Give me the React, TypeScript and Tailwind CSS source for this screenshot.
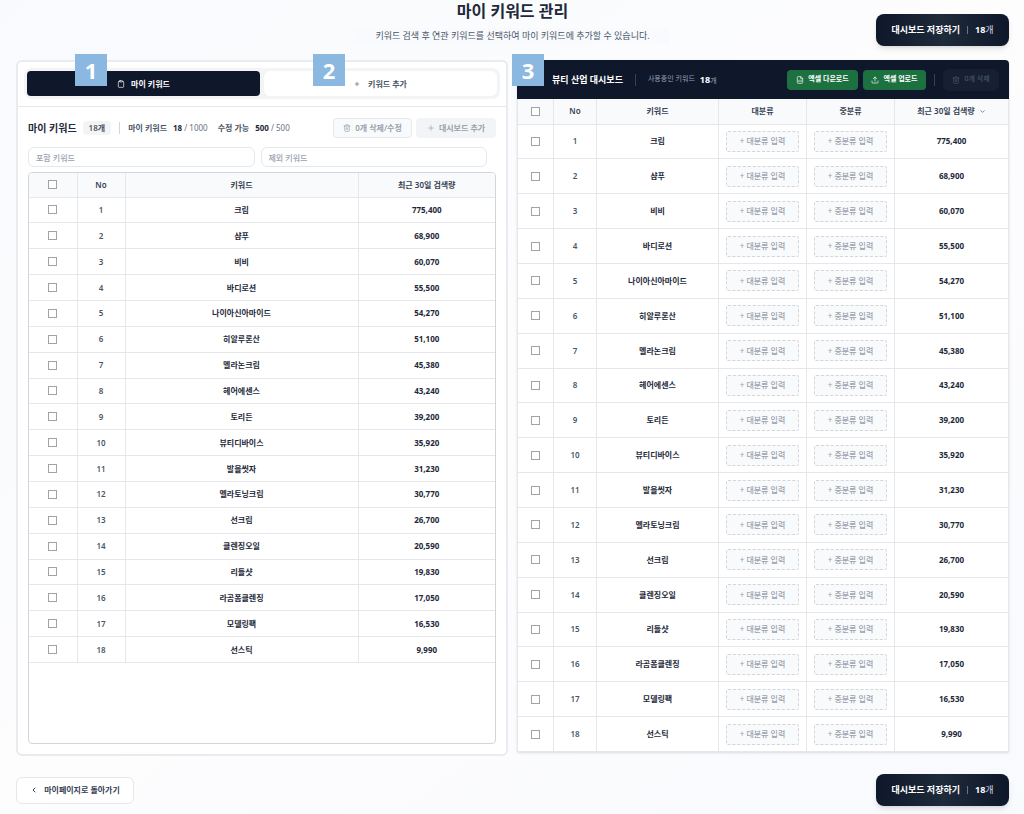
import { ChevronDown, ChevronLeft, Clipboard, FileSpreadsheet, Plus, Trash2, Upload } from "lucide-react";

const keywords: [string, string][] = [
  ["크림", "775,400"],
  ["샴푸", "68,900"],
  ["비비", "60,070"],
  ["바디로션", "55,500"],
  ["나이아신아마이드", "54,270"],
  ["히알루론산", "51,100"],
  ["멜라논크림", "45,380"],
  ["헤어에센스", "43,240"],
  ["토리든", "39,200"],
  ["뷰티디바이스", "35,920"],
  ["발을씻자", "31,230"],
  ["멜라토닝크림", "30,770"],
  ["선크림", "26,700"],
  ["클렌징오일", "20,590"],
  ["리들샷", "19,830"],
  ["라곰폼클렌징", "17,050"],
  ["모델링팩", "16,530"],
  ["선스틱", "9,990"],
];

function Check({ label }: { label: string }) {
  return (
    <input
      type="checkbox"
      aria-label={label}
      className="mx-auto block size-[9px] appearance-none border border-[#a3a3a3] bg-white checked:bg-slate-700"
    />
  );
}

function Marker({ n, place }: { n: number; place: string }) {
  return (
    <span
      className={`absolute z-10 flex size-8 items-center justify-center bg-[#8bb8e1] text-[22px] font-bold text-white ${place}`}
    >
      {n}
    </span>
  );
}

function SaveButton() {
  return (
    <button className="flex h-8 w-[133px] items-center justify-center gap-[7px] rounded-lg bg-linear-to-r from-[#0f172a] via-[#1e2b3a] to-[#0f172a] text-[9px] font-bold text-white shadow-md">
      <span>대시보드 저장하기</span>
      <span className="h-2 w-px bg-slate-500" />
      <span>
        18<span className="font-normal text-slate-300">개</span>
      </span>
    </button>
  );
}

function MyKeywords() {
  return (
    <section className="relative flex flex-col rounded-md border-2 border-[#e9ebef] bg-white">
      <Marker n={1} place="left-[57px] -top-2" />
      <Marker n={2} place="left-[295px] -top-2" />
      <div className="border-b border-gray-200 px-1.5 pt-1.5 pb-[7px]">
        <div className="grid grid-cols-2 gap-1 rounded-lg bg-gray-100 p-[3px]">
          <button className="flex h-[25px] items-center justify-center gap-1.5 rounded bg-[#0f172a] text-[8px] font-bold text-white">
            <Clipboard className="size-2" />
            마이 키워드
          </button>
          <button className="flex h-[25px] items-center justify-center gap-2 rounded-md bg-white text-[8px] font-semibold text-gray-600">
            <Plus className="size-1.5 text-gray-500" strokeWidth={3} />
            키워드 추가
          </button>
        </div>
      </div>
      <div className="flex grow flex-col px-2.5 pt-[11px] pb-2.5">
        <div className="flex h-5 items-center text-[8px] text-gray-500">
          <h2 className="text-[10px] font-bold text-gray-800">마이 키워드</h2>
          <span className="ml-1.5 flex h-3.5 items-center rounded bg-gray-100 px-1.5 font-semibold text-gray-600">18개</span>
          <span className="mx-2 h-3 w-px bg-gray-300" />
          <span className="font-semibold text-gray-600">마이 키워드</span>
          <span className="ml-1.5"><b className="text-gray-800">18</b> / 1000</span>
          <span className="ml-2.5 font-semibold text-gray-600">수정 가능</span>
          <span className="ml-1.5"><b className="text-gray-800">500</b> / 500</span>
          <button className="ml-auto flex h-5 w-[79px] items-center justify-center gap-1 rounded border border-gray-200 bg-gray-50 font-semibold text-gray-400">
            <Trash2 className="size-2" />
            0개 삭제/수정
          </button>
          <button className="ml-1 flex h-5 w-20 items-center justify-center gap-1 rounded bg-gray-100 font-semibold text-gray-400">
            <Plus className="size-2" />
            대시보드 추가
          </button>
        </div>
        <div className="mt-[9px] grid grid-cols-2 gap-1.5 pr-[9px]">
          <input
            aria-label="포함 키워드"
            placeholder="포함 키워드"
            className="h-5 min-w-0 rounded-md border border-gray-200 px-[7px] text-[8px] font-medium placeholder:text-gray-400"
          />
          <input
            aria-label="제외 키워드"
            placeholder="제외 키워드"
            className="h-5 min-w-0 rounded-md border border-gray-200 px-[7px] text-[8px] font-medium placeholder:text-gray-400"
          />
        </div>
        <div className="mt-[5px] grow overflow-hidden rounded border border-gray-300">
          <table className="h-[490px] w-full table-fixed border-collapse text-center text-[8px] leading-3">
            <thead>
              <tr className="h-6 bg-gray-50 text-gray-700">
                <th className="w-12 border-r border-b border-gray-200"><Check label="전체 선택" /></th>
                <th className="w-12 border-r border-b border-gray-200 font-semibold">No</th>
                <th className="border-r border-b border-gray-200 font-semibold">키워드</th>
                <th className="w-[137px] border-b border-gray-200 font-semibold">최근 30일 검색량</th>
              </tr>
            </thead>
            <tbody>
              {keywords.map(([name, volume], i) => (
                <tr key={name}>
                  <td className="border-r border-b border-gray-200"><Check label={name} /></td>
                  <td className="border-r border-b border-gray-200 font-semibold text-gray-600">{i + 1}</td>
                  <td className="border-r border-b border-gray-200 font-semibold text-gray-800">{name}</td>
                  <td className="border-b border-gray-200 font-bold text-gray-800">{volume}</td>
                </tr>
              ))}
            </tbody>
          </table>
        </div>
      </div>
    </section>
  );
}

function CategoryCell({ label }: { label: string }) {
  return (
    <td className="border-r border-b border-gray-200 px-[7px]">
      <button className="flex h-[21px] w-full items-center justify-center rounded-xs border border-dashed border-gray-300 bg-gray-50 font-medium text-gray-400">
        + {label} 입력
      </button>
    </td>
  );
}

function Dashboard() {
  return (
    <section className="relative mb-1 self-start rounded-t bg-white shadow-sm">
      <Marker n={3} place="-left-[5px] -top-1.5" />
      <header className="flex h-[39px] items-center rounded-t bg-[#0f172a] pr-2.5 pl-[35px] text-[7px] text-slate-400">
        <h2 className="text-[9px] font-bold text-white">뷰티 산업 대시보드</h2>
        <span className="mx-3 h-3 w-px bg-slate-700" />
        <span>사용중인 키워드</span>
        <span className="ml-[5px]"><b className="text-[9px] text-white">18</b>개</span>
        <button className="ml-auto flex h-5 w-[71px] items-center justify-center gap-1 rounded bg-[#1d7141] font-bold text-white">
          <FileSpreadsheet className="size-2" />
          엑셀 다운로드
        </button>
        <button className="ml-[5px] flex h-5 w-[63px] items-center justify-center gap-1 rounded bg-[#1d7141] font-bold text-white">
          <Upload className="size-2" />
          엑셀 업로드
        </button>
        <span className="mx-2 h-3 w-px bg-slate-700" />
        <button className="flex h-[22px] w-14 items-center justify-center gap-1 rounded-md bg-[#172033] font-medium text-slate-600">
          <Trash2 className="size-2" />
          0개 삭제
        </button>
      </header>
      <table className="h-[653px] w-full table-fixed border-collapse border-x border-gray-200 text-center text-[8px] leading-3">
        <thead>
          <tr className="h-[25px] bg-gray-50 text-gray-700">
            <th className="w-9 border-r border-b border-gray-200"><Check label="전체 선택" /></th>
            <th className="w-[43px] border-r border-b border-gray-200 font-semibold">No</th>
            <th className="border-r border-b border-gray-200 font-semibold">키워드</th>
            <th className="w-[88px] border-r border-b border-gray-200 font-semibold">대분류</th>
            <th className="w-[88px] border-r border-b border-gray-200 font-semibold">중분류</th>
            <th className="w-[114px] border-b border-gray-200 font-semibold">
              <span className="flex items-center justify-center gap-1">
                최근 30일 검색량
                <ChevronDown className="size-[7px]" />
              </span>
            </th>
          </tr>
        </thead>
        <tbody>
          {keywords.map(([name, volume], i) => (
            <tr key={name}>
              <td className="border-r border-b border-gray-200"><Check label={name} /></td>
              <td className="border-r border-b border-gray-200 font-semibold text-gray-600">{i + 1}</td>
              <td className="border-r border-b border-gray-200 font-semibold text-gray-800">{name}</td>
              <CategoryCell label="대분류" />
              <CategoryCell label="중분류" />
              <td className="border-b border-gray-200 font-bold text-gray-800">{volume}</td>
            </tr>
          ))}
        </tbody>
      </table>
    </section>
  );
}

export default function App() {
  return (
    <main className="min-h-screen bg-linear-to-br from-[#f8fafd] via-[#fdfdfe] to-[#f9fafe] pr-[15px] pb-2 pl-4 font-['Noto_Sans','Noto_Sans_CJK_KR',sans-serif]">
      <header className="grid h-[60px] grid-cols-[1fr_auto_1fr]">
        <div className="col-start-2 text-center">
          <h1 className="text-[16px] leading-[22px] font-bold text-gray-800">마이 키워드 관리</h1>
          <p className="mt-1.5 bg-[#f8fafe] px-5 text-[9px] leading-4 text-gray-600">
            키워드 검색 후 연관 키워드를 선택하여 마이 키워드에 추가할 수 있습니다.
          </p>
        </div>
        <div className="mt-3.5 justify-self-end">
          <SaveButton />
        </div>
      </header>
      <div className="grid grid-cols-2 gap-[9px]">
        <MyKeywords />
        <Dashboard />
      </div>
      <footer className="mt-[18px] flex items-center justify-between">
        <a
          href="#mypage"
          className="flex h-[27px] w-[118px] items-center justify-center gap-1.5 rounded-md border border-gray-200 bg-white text-[8px] font-semibold text-gray-700"
        >
          <ChevronLeft className="size-2" strokeWidth={3} />
          마이페이지로 돌아가기
        </a>
        <SaveButton />
      </footer>
    </main>
  );
}
